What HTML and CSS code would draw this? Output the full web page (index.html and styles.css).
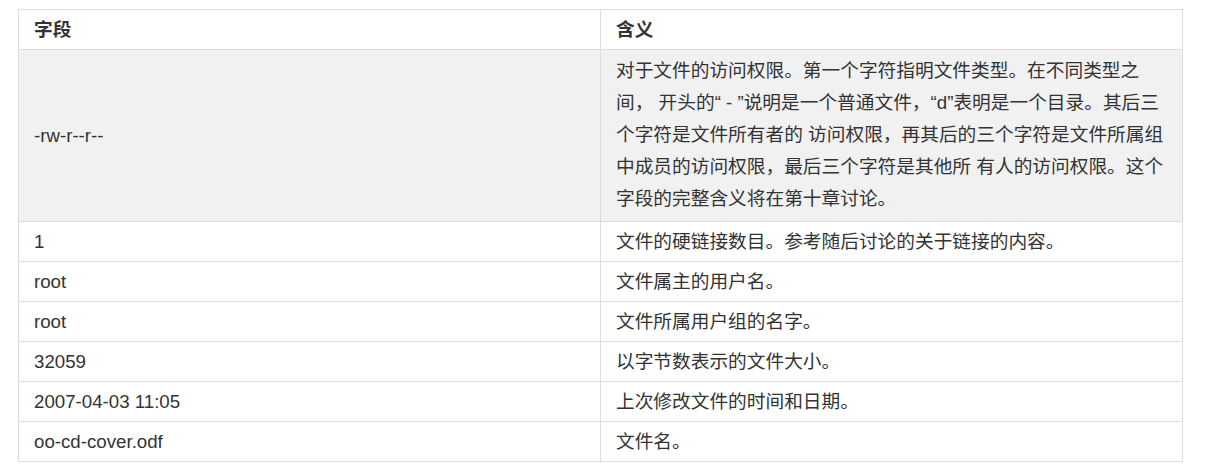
FILE: index.html
```html
<!DOCTYPE html>
<html lang="zh-CN">
<head>
<meta charset="utf-8">
<title>ls -l 字段</title>
<link rel="stylesheet" href="styles.css">
</head>
<body>
<div class="wrap">
  <table class="reference">
    <thead>
      <tr><th>字段</th><th>含义</th></tr>
    </thead>
    <tbody>
      <tr class="shade">
        <td>-rw-r--r--</td>
        <td class="long">对于文件的访问权限。第一个字符指明文件类型。在不同类型之间， 开头的“ - ”说明是一个普通文件，“d”表明是一个目录。其后三个字符是文件所有者的 访问权限，再其后的三个字符是文件所属组中成员的访问权限，最后三个字符是其他所 有人的访问权限。这个字段的完整含义将在第十章讨论。</td>
      </tr>
      <tr><td>1</td><td>文件的硬链接数目。参考随后讨论的关于链接的内容。</td></tr>
      <tr><td>root</td><td>文件属主的用户名。</td></tr>
      <tr><td>root</td><td>文件所属用户组的名字。</td></tr>
      <tr><td>32059</td><td>以字节数表示的文件大小。</td></tr>
      <tr><td>2007-04-03 11:05</td><td>上次修改文件的时间和日期。</td></tr>
      <tr><td>oo-cd-cover.odf</td><td>文件名。</td></tr>
    </tbody>
  </table>
</div>
</body>
</html>
```
FILE: styles.css
```css
html, body {
  margin: 0;
  padding: 0;
  background: #fff;
}
body {
  font-family: "Liberation Sans", Arial, "Noto Sans CJK SC", sans-serif;
  font-size: 18.7px;
  color: #333;
}
.wrap {
  padding: 9px 0 0 18px;
}
.reference {
  width: 1165px;
  border-collapse: collapse;
  table-layout: fixed;
  border: 1px solid #ddd;
}
.reference th,
.reference td {
  width: 50%;
  border: 1px solid #ddd;
  padding: 6px 15px 5px;
  height: 28px;
  line-height: 28px;
  text-align: left;
  vertical-align: middle;
}
.reference th {
  font-weight: bold;
}
.reference tr.shade td {
  background: #f1f1f1;
}
.reference td.long {
  line-height: 32px;
  padding-top: 5px;
  padding-bottom: 6px;
}
```
